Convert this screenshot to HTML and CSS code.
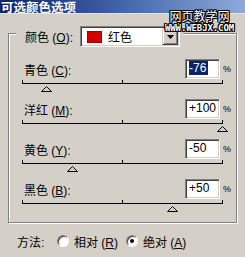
FILE: index.html
```html
<!DOCTYPE html>
<html lang="zh">
<head>
    <meta charset="UTF-8">
    <link rel="stylesheet" href="styles.css">
    <title>可选颜色选项</title>
</head>
<body>
    <div class="titlebar">可选颜色选项</div>

    <div class="watermark">
        <div class="wm-cn">网页教学网</div>
        <div class="wm-en">WWW.WEBJX.COM</div>
    </div>

    <div class="group">
        <div class="legend">
            <span class="legend-label">颜色 (<u>O</u>):</span>
            <div class="combo">
                <span class="swatch"></span>
                <span class="combo-text">红色</span>
                <span class="combo-btn">
                    <svg width="7" height="4" viewBox="0 0 7 4"><polygon points="0,0 7,0 3.5,4" fill="#000"/></svg>
                </span>
            </div>
        </div>

        <div class="sliders">
            <div class="slider">
                <div class="slider-head">
                    <span class="slider-label">青色 (<u>C</u>):</span>
                    <span class="field"><span class="selected">-76</span></span>
                    <span class="pct">%</span>
                </div>
                <div class="track">
                    <div class="track-line">
                        <span class="tick tick-start"></span><span class="tick tick-mid"></span><span class="tick tick-end"></span>
                        <svg class="thumb" style="left: 12%" width="11" height="6" viewBox="0 0 11 6"><polygon points="5.5,0.5 10.5,5.5 0.5,5.5" fill="none" stroke="#000"/></svg>
                    </div>
                </div>
            </div>

            <div class="slider">
                <div class="slider-head">
                    <span class="slider-label">洋红 (<u>M</u>):</span>
                    <span class="field">+100</span>
                    <span class="pct">%</span>
                </div>
                <div class="track">
                    <div class="track-line">
                        <span class="tick tick-start"></span><span class="tick tick-mid"></span><span class="tick tick-end"></span>
                        <svg class="thumb" style="left: 100%" width="11" height="6" viewBox="0 0 11 6"><polygon points="5.5,0.5 10.5,5.5 0.5,5.5" fill="none" stroke="#000"/></svg>
                    </div>
                </div>
            </div>

            <div class="slider">
                <div class="slider-head">
                    <span class="slider-label">黄色 (<u>Y</u>):</span>
                    <span class="field">-50</span>
                    <span class="pct">%</span>
                </div>
                <div class="track">
                    <div class="track-line">
                        <span class="tick tick-start"></span><span class="tick tick-mid"></span><span class="tick tick-end"></span>
                        <svg class="thumb" style="left: 25%" width="11" height="6" viewBox="0 0 11 6"><polygon points="5.5,0.5 10.5,5.5 0.5,5.5" fill="none" stroke="#000"/></svg>
                    </div>
                </div>
            </div>

            <div class="slider">
                <div class="slider-head">
                    <span class="slider-label">黑色 (<u>B</u>):</span>
                    <span class="field">+50</span>
                    <span class="pct">%</span>
                </div>
                <div class="track">
                    <div class="track-line">
                        <span class="tick tick-start"></span><span class="tick tick-mid"></span><span class="tick tick-end"></span>
                        <svg class="thumb" style="left: 75%" width="11" height="6" viewBox="0 0 11 6"><polygon points="5.5,0.5 10.5,5.5 0.5,5.5" fill="none" stroke="#000"/></svg>
                    </div>
                </div>
            </div>
        </div>
    </div>

    <div class="method">
        <span class="method-label">方法:</span>
        <span class="radio"></span>
        <span class="option-text">相对 (<u>R</u>)</span>
        <span class="radio checked"></span>
        <span class="option-text">绝对 (<u>A</u>)</span>
    </div>
</body>
</html>
```

FILE: styles.css
```css
body {
    margin: 0;
    width: 245px;
    height: 257px;
    overflow: hidden;
    position: relative;
    background-color: #d4d0c8; /* 窗口灰 */
    font-family: "Liberation Sans", "Noto Sans CJK SC", sans-serif;
    font-size: 12px;
    color: #000;
}

/* 标题栏 */
.titlebar {
    height: 14px;
    padding-left: 1px;
    background: linear-gradient(to right, #0a246a, #4a6cae 55%, #8eaadc);
    box-shadow: inset 0 -1px 0 #e6e4de;
    color: #fff;
    font-weight: bold;
    font-size: 12.5px;
    line-height: 14px;
    font-family: "Noto Sans CJK SC", sans-serif;
    white-space: nowrap;
}

/* 水印 */
.watermark {
    position: absolute;
    top: 9px;
    left: 162px;
    width: 75px;
    text-align: center;
    color: #fff;
    text-shadow: 1px 0 #000, -1px 0 #000, 0 1px #000, 0 -1px #000,
                 1px 1px #000, -1px -1px #000, 1px -1px #000, -1px 1px #000;
}
.wm-cn {
    font-family: "Noto Sans CJK SC", sans-serif;
    font-size: 12px;
    line-height: 14px;
}
.wm-en {
    font-family: "DejaVu Sans Mono", monospace;
    font-weight: bold;
    font-size: 9px;
    line-height: 10px;
    letter-spacing: -0.1px;
}

/* 分组框 */
.group {
    margin: 19px 0 0 8px;
    width: 227px;
    padding-bottom: 3px;
    border: 1px solid #808080;
    box-shadow: inset 1px 1px 0 #fff, 1px 1px 0 #fff;
}
.legend {
    display: flex;
    align-items: center;
    width: fit-content;
    margin: -8px 0 0 7px;
    padding: 0 3px 0 9px;
    background-color: #d4d0c8;
}
.legend-label {
    width: 55px;
    white-space: nowrap;
}
.combo {
    display: flex;
    align-items: center;
    box-sizing: border-box;
    width: 100px;
    height: 21px;
    padding: 0 1px 0 6px;
    background-color: #fff;
    border: 1px solid;
    border-color: #808080 #fff #fff #808080;
    box-shadow: inset 1px 1px 0 #404040, inset -1px -1px 0 #d4d0c8;
}
.swatch {
    width: 15px;
    height: 12px;
    margin-top: 1px;
    background-color: #d40000;
    box-shadow: inset 0 0 0 1px #a00000;
}
.combo-text {
    flex-grow: 1;
    margin-left: 6px;
    font-family: "Noto Sans CJK SC", sans-serif;
}
.combo-btn {
    display: flex;
    align-items: center;
    justify-content: center;
    box-sizing: border-box;
    width: 16px;
    height: 17px;
    background-color: #d4d0c8;
    border: 1px solid;
    border-color: #d4d0c8 #404040 #404040 #d4d0c8;
    box-shadow: inset 1px 1px 0 #fff, inset -1px -1px 0 #808080;
}

/* 滑块 */
.sliders {
    margin-top: 12px;
    padding-left: 13px;
}
.slider-head {
    display: flex;
    align-items: center;
    width: 207px;
    height: 20px;
}
.slider-label {
    flex-grow: 1;
    padding-left: 2px;
    white-space: nowrap;
}
.field {
    box-sizing: border-box;
    width: 35px;
    height: 20px;
    line-height: 16px;
    padding-left: 3px;
    background-color: #fff;
    border: 1px solid;
    border-color: #808080 #fff #fff #808080;
    box-shadow: inset 1px 1px 0 #404040, inset -1px -1px 0 #d4d0c8;
}
.selected {
    display: inline-block;
    padding-right: 2px;
    line-height: 14px;
    background-color: #0a246a;
    color: #fff;
}
.pct {
    width: 6px;
    margin-left: 3px;
    font-size: 9px;
}
.track {
    height: 20px;
}
.track-line {
    position: relative;
    top: 4px;
    width: 200px;
    height: 1px;
    background-color: #000;
}
.tick {
    position: absolute;
    bottom: 0;
    width: 1px;
    height: 4px;
    background-color: #000;
}
.tick-start { left: 0; }
.tick-mid { left: 100px; }
.tick-end { left: 200px; }
.thumb {
    position: absolute;
    top: 3px;
    margin-left: -5px;
}

/* 方法 */
.method {
    display: flex;
    align-items: center;
    height: 16px;
    margin-top: 10px;
    padding-left: 17px;
}
.method-label {
    width: 40px;
}
.radio {
    box-sizing: border-box;
    width: 12px;
    height: 12px;
    border-radius: 50%;
    border: 1px solid;
    border-color: #808080 #fff #fff #808080;
    background-color: #fff;
    box-shadow: inset 1px 1px 0 #404040;
    position: relative;
}
.radio.checked::after {
    content: "";
    position: absolute;
    left: 3px;
    top: 3px;
    width: 4px;
    height: 4px;
    border-radius: 50%;
    background-color: #000;
}
.option-text {
    width: 52px;
    margin-left: 5px;
    white-space: nowrap;
}
```
